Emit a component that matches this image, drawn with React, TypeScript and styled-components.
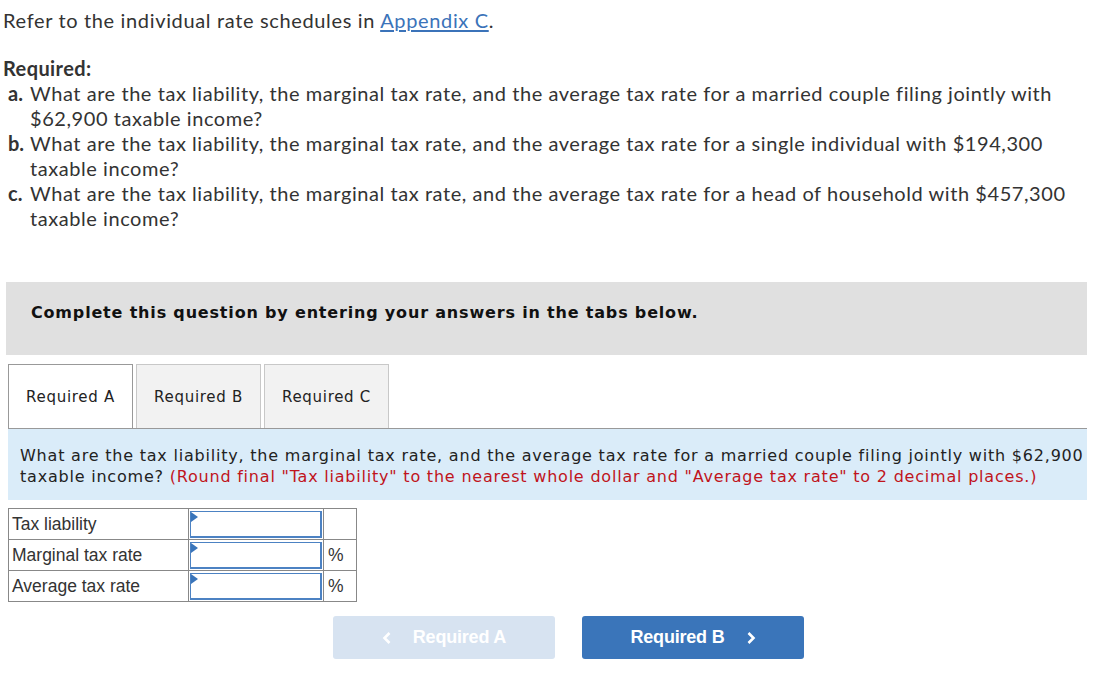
import React from 'react';
import styled, { createGlobalStyle } from 'styled-components';

const Global = createGlobalStyle`
  body {
    margin: 0;
    background: #fff;
    font-family: Lato, "Open Sans", sans-serif;
  }
`;

const Page = styled.div`
  width: 1099px;
  padding: 8px 12px 0 3px;
  box-sizing: border-box;
`;

const Intro = styled.p`
  margin: 0;
  font-size: 20px;
  letter-spacing: 0.65px;
  line-height: 25px;
  color: #333;
  a {
    color: #3b73b9;
    text-decoration: underline;
    text-underline-offset: 2px;
  }
`;

const ReqTitle = styled.div`
  margin-top: 23px;
  font-size: 20px;
  letter-spacing: 0.4px;
  line-height: 25px;
  font-weight: 700;
  color: #333;
`;

const ReqList = styled.ol`
  list-style: none;
  margin: 0;
  padding: 0 0 0 5px;
`;

const ReqItem = styled.li`
  display: flex;
  font-size: 20px;
  letter-spacing: 0.56px;
  line-height: 25px;
  color: #333;
  b {
    flex: none;
    width: 22px;
    letter-spacing: 0;
  }
`;

const Banner = styled.div`
  margin: 51px 0 0 3px;
  height: 73px;
  box-sizing: border-box;
  padding: 0 0 12px 25px;
  background: #e0e0e0;
  display: flex;
  align-items: center;
  font-family: "DejaVu Sans", Verdana, sans-serif;
  font-weight: 700;
  font-size: 16px;
  letter-spacing: 0.82px;
  color: #111;
`;

const Tabs = styled.div`
  margin: 9px 0 0 5px;
  display: flex;
  gap: 3px;
  border-bottom: 1px solid #999;
`;

const Tab = styled.div<{ $active?: boolean }>`
  width: 125px;
  height: 64px;
  box-sizing: border-box;
  display: flex;
  align-items: center;
  justify-content: center;
  border: 1px solid ${p => (p.$active ? '#999' : '#c8c8c8')};
  border-bottom: none;
  background: ${p => (p.$active ? '#fff' : '#f2f2f2')};
  margin-bottom: ${p => (p.$active ? '-1px' : '0')};
  font-family: "DejaVu Sans", Verdana, sans-serif;
  font-size: 15px;
  letter-spacing: 0.7px;
  color: #222;
`;

const Prompt = styled.div`
  margin-left: 5px;
  background: #daecf9;
  padding: 16px 0 13px 12px;
  font-family: "DejaVu Sans", Verdana, sans-serif;
  font-size: 16px;
  letter-spacing: 0.79px;
  line-height: 21px;
  color: #222;
  span {
    color: #c0141c;
  }
`;

const Grid = styled.table`
  margin: 8px 0 0 5px;
  border-collapse: collapse;
  font-family: "Liberation Sans", Arial, sans-serif;
  font-size: 17.5px;
  color: #333;
  td {
    border: 1px solid #888;
    height: 31px;
    line-height: 20px;
    padding: 0;
    box-sizing: border-box;
  }
`;

const Label = styled.td`
  width: 180px;
  padding-left: 3px !important;
`;

const InputCell = styled.td`
  width: 135px;
  padding: 1px !important;
`;

const Unit = styled.td`
  width: 33px;
  padding-left: 4px !important;
`;

const Field = styled.div`
  position: relative;
  height: 27px;
  border: 2px solid #4c82c3;
  border-top-width: 1px;
  border-left-width: 1px;
  box-sizing: border-box;
  &::before {
    content: '';
    position: absolute;
    left: 0;
    top: 0;
    border-left: 7px solid #3a75ba;
    border-top: 5px solid transparent;
    border-bottom: 5px solid transparent;
  }
`;

const Nav = styled.div`
  display: flex;
  gap: 27px;
  margin: 14px 0 0 330px;
`;

const NavButton = styled.div<{ $disabled?: boolean }>`
  width: 222px;
  height: 43px;
  border-radius: 3px;
  display: flex;
  align-items: center;
  justify-content: center;
  gap: 21px;
  background: ${p => (p.$disabled ? '#d7e3f1' : '#3a75ba')};
  color: #fff;
  font-family: "Liberation Sans", Arial, sans-serif;
  font-weight: 700;
  font-size: 18px;
  letter-spacing: -0.2px;
  svg {
    display: block;
  }
`;

const Chevron = ({ dir }: { dir: 'left' | 'right' }) => (
  <svg width="10" height="14" viewBox="0 0 10 14">
    <path
      d={dir === 'left' ? 'M7.5 2 L2.5 7 L7.5 12' : 'M2.5 2 L7.5 7 L2.5 12'}
      fill="none"
      stroke="#fff"
      strokeWidth="2.6"
    />
  </svg>
);

const rows = [
  { label: 'Tax liability', unit: '' },
  { label: 'Marginal tax rate', unit: '%' },
  { label: 'Average tax rate', unit: '%' },
];

export default function App() {
  return (
    <Page>
      <Global />
      <Intro>
        Refer to the individual rate schedules in <a href="#">Appendix C</a>.
      </Intro>
      <ReqTitle>Required:</ReqTitle>
      <ReqList>
        <ReqItem>
          <b>a.</b>
          <span>
            What are the tax liability, the marginal tax rate, and the average tax rate for a married couple filing jointly with
            <br />
            $62,900 taxable income?
          </span>
        </ReqItem>
        <ReqItem>
          <b>b.</b>
          <span>
            What are the tax liability, the marginal tax rate, and the average tax rate for a single individual with $194,300
            <br />
            taxable income?
          </span>
        </ReqItem>
        <ReqItem>
          <b>c.</b>
          <span>
            What are the tax liability, the marginal tax rate, and the average tax rate for a head of household with $457,300
            <br />
            taxable income?
          </span>
        </ReqItem>
      </ReqList>

      <Banner>Complete this question by entering your answers in the tabs below.</Banner>

      <Tabs>
        <Tab $active>Required A</Tab>
        <Tab>Required B</Tab>
        <Tab>Required C</Tab>
      </Tabs>

      <Prompt>
        What are the tax liability, the marginal tax rate, and the average tax rate for a married couple filing jointly with $62,900
        <br />
        taxable income?{' '}
        <span>(Round final "Tax liability" to the nearest whole dollar and "Average tax rate" to 2 decimal places.)</span>
      </Prompt>

      <Grid>
        <tbody>
          {rows.map(r => (
            <tr key={r.label}>
              <Label>{r.label}</Label>
              <InputCell>
                <Field />
              </InputCell>
              <Unit>{r.unit}</Unit>
            </tr>
          ))}
        </tbody>
      </Grid>

      <Nav>
        <NavButton $disabled>
          <Chevron dir="left" />
          Required A
        </NavButton>
        <NavButton>
          Required B
          <Chevron dir="right" />
        </NavButton>
      </Nav>
    </Page>
  );
}
